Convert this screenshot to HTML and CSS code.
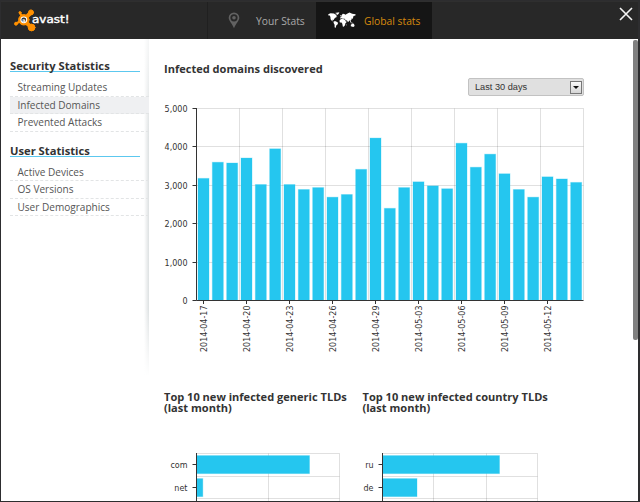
FILE: index.html
```html
<!DOCTYPE html>
<html lang="en">
<head>
    <meta charset="UTF-8">
    <title>avast! statistics</title>
    <link rel="stylesheet" href="styles.css">
</head>
<body>
    <div class="window">
        <div class="header">
            <div class="brand">
                <svg class="logo" viewBox="0 0 58 26">
                    <g fill="#ff9000" stroke="#ff9000" stroke-linecap="round">
                        <path d="M7 5 L11 12 M3 15.5 L10 12" fill="none" stroke-width="2.4" />
                        <path d="M17.5 5 L12 10.5 M12 13.5 L18 19" fill="none" stroke-width="4" />
                        <circle cx="10.8" cy="11.8" r="5.2" />
                        <circle cx="7" cy="4.6" r="1" />
                        <circle cx="3" cy="15.7" r="1.5" />
                        <circle cx="18" cy="4.4" r="2.5" />
                        <circle cx="18.6" cy="19.5" r="3.4" />
                    </g>
                    <circle cx="10.8" cy="11.8" r="3.4" fill="#fff" />
                    <circle cx="10.8" cy="11.8" r="2.4" fill="#343434" />
                    <text x="10.8" y="13.6" class="logo-a">a</text>
                    <text x="19" y="15" class="logo-text" textLength="37.5" lengthAdjust="spacingAndGlyphs">avast!</text>
                </svg>
            </div>
            <div class="tab">
                <svg class="pin" viewBox="0 0 12 17">
                    <path d="M6 .5 A5.3 5.3 0 0 0 .7 5.8 C.7 9 4.4 11.8 6 16.3 C7.6 11.8 11.3 9 11.3 5.8 A5.3 5.3 0 0 0 6 .5 Z M6 2.2 A3.6 3.6 0 1 1 6 9.4 A3.6 3.6 0 1 1 6 2.2 Z" fill="#626262" fill-rule="evenodd" />
                    <circle cx="6" cy="5.8" r="1.8" fill="#626262" />
                </svg>
                <span>Your Stats</span>
            </div>
            <div class="tab tab-active">
                <svg class="world" viewBox="0 0 28 17">
                    <g fill="#fff">
                        <path d="M.3 2.3 L2.5 1.2 L6 1.4 L7.4 2.5 L8.9 2.7 L8 4.2 L9.4 4.7 L7.2 5.7 L6.1 7 L5.7 8.2 L4.9 7.6 L4.3 8.4 L5.7 9.4 L4 8.9 L2.6 7.2 L2.4 5 L1.8 3.5 L.4 3.4 Z" />
                        <path d="M6.8 1 L11.4 .3 L10.5 2.1 L9.1 3 L8.4 1.6 Z" />
                        <path d="M5.9 9.2 L7.8 9.2 L10.1 10.7 L9.5 12.4 L8.4 13.3 L7.5 16 L6.6 15.3 L6.6 12.8 L5.5 10.7 Z" />
                        <path d="M12.2 5.6 L13.5 4.6 L13.2 3.7 L14.8 1.8 L16.3 2 L17.4 2.7 L19.5 1.4 L21.5 .6 L24.2 1.8 L27.6 2.3 L27.4 3.4 L25.5 4 L25.2 5.3 L24.8 6.8 L23.6 6.5 L23.4 8 L22.5 8.5 L23.2 10 L22.4 10 L21.5 8.3 L20.7 9.5 L20 10.2 L19 8.4 L17.6 8.2 L16.7 6.7 L14.9 6.7 L13.7 6.3 L12.4 6.8 Z" />
                        <path d="M12.6 7.2 L14.5 6.8 L17 7.8 L17.8 9.5 L18.9 9.7 L17.3 11.4 L17.1 13 L15.8 14.8 L14.8 14.5 L14.3 11.7 L13.5 10.6 L11.9 10.4 L11.4 8.8 Z" />
                        <path d="M22.8 12.7 L24.6 11.6 L26 12 L26.6 14 L25.3 14.9 L22.8 14.2 Z" />
                        <path d="M22 10.2 L24.2 10.8 L26 11.2 L23 11.2 Z M18.6 12.3 L19 12 L18.5 13.6 L18.1 13.7 Z M12.4 3.2 L13 3 L13 4.3 L12.2 4.4 Z" />
                    </g>
                </svg>
                <span>Global stats</span>
            </div>
            <div class="header-end">
                <svg class="close" viewBox="0 0 14 14">
                    <path d="M1 1 L13 13 M13 1 L1 13" stroke="#f4f4f4" stroke-width="1.6" />
                </svg>
            </div>
        </div>

        <div class="content">
            <div class="sidebar">
                <h2>Security Statistics</h2>
                <ul>
                    <li>Streaming Updates</li>
                    <li class="selected">Infected Domains</li>
                    <li>Prevented Attacks</li>
                </ul>
                <h2>User Statistics</h2>
                <ul>
                    <li>Active Devices</li>
                    <li>OS Versions</li>
                    <li>User Demographics</li>
                </ul>
            </div>

            <div class="main">
                <h3>Infected domains discovered</h3>
                <div class="filter">
                    <div class="select">
                        <span>Last 30 days</span>
                        <div class="select-arrow"></div>
                    </div>
                </div>
                <svg id="domainsChart" class="chart" width="430" height="260"></svg>

                <div class="columns">
                    <div class="column">
                        <h3>Top 10 new infected generic TLDs<br>(last month)</h3>
                        <svg id="genericChart" class="tld-chart" width="190" height="60"></svg>
                    </div>
                    <div class="column">
                        <h3>Top 10 new infected country TLDs<br>(last month)</h3>
                        <svg id="countryChart" class="tld-chart" width="190" height="60"></svg>
                    </div>
                </div>
            </div>

            <div class="scrollbar"><div class="scroll-thumb"></div></div>
        </div>
    </div>

    <script>
        const domains = [3180, 3600, 3580, 3710, 3020, 3950, 3020, 2890, 2940, 2690, 2760, 3415, 4230, 2400,
            2940, 3090, 2985, 2910, 4095, 3470, 3810, 3300, 2890, 2690, 3220, 3165, 3075];
        const days = ['2014-04-17', '2014-04-20', '2014-04-23', '2014-04-26', '2014-04-29',
            '2014-05-03', '2014-05-06', '2014-05-09', '2014-05-12'];

        function line(x1, y1, x2, y2, cls) {
            return `<line x1="${x1}" y1="${y1}" x2="${x2}" y2="${y2}" class="${cls}" />`;
        }

        // daily columns
        function drawDomains() {
            const left = 32.5, right = 419.5, top = 8.5, bottom = 200.5;
            const step = (right - left) / domains.length;
            let out = '';
            for (let i = 0; i <= 5; i++) {
                const y = Math.round(bottom - i * 38.4 - 0.5) + 0.5;
                if (i > 0) out += line(left, y, right, y, 'grid');
                out += `<text x="23.5" y="${y + 3}" class="tick-label">${i === 0 ? '0' : i + ',000'}</text>`;
                out += line(left - 4, y, left, y, 'axis');
            }
            for (let i = 1; i <= 9; i++) {
                out += line(left + i * 43, top, left + i * 43, bottom, 'grid');
            }
            domains.forEach((value, i) => {
                const h = value * 0.0384;
                out += `<rect x="${left + i * step + 1.5}" y="${bottom - h}" width="11" height="${h}" class="bar" />`;
            });
            out += line(left, top - 0.5, left, bottom, 'axis');
            out += line(left, bottom, right, bottom, 'axis');
            days.forEach((day, i) => {
                const x = 39.5 + i * 43;
                out += line(x, bottom, x, bottom + 3.5, 'axis');
                out += `<text class="tick-label" transform="translate(${x + 3.2} 205.5) rotate(-90)">${day}</text>`;
            });
            document.getElementById('domainsChart').innerHTML = out;
        }

        // horizontal bars per TLD
        function drawTlds(id, left, right, gridX, rows) {
            let out = '';
            [3.5, 26.5, 48.5].forEach(y => out += line(left, y, right, y, 'grid'));
            gridX.forEach(x => out += line(x, 3.5, x, 60, 'grid'));
            rows.forEach((row, i) => {
                const y = 5.6 + i * 23;
                out += `<rect x="${left}" y="${y}" width="${row[1]}" height="18" class="bar" />`;
                out += line(left - 4, 14.5 + i * 23, left, 14.5 + i * 23, 'axis');
                out += `<text x="${left - 9}" y="${17.5 + i * 23}" class="tick-label">${row[0]}</text>`;
            });
            out += line(left, 3, left, 60, 'axis');
            document.getElementById(id).innerHTML = out;
        }

        drawDomains();
        drawTlds('genericChart', 32.5, 175.5, [104.5, 175.5], [['com', 113], ['net', 6.3]]);
        drawTlds('countryChart', 20.5, 175.5, [71.5, 124.5, 175.5], [['ru', 117], ['de', 34.5]]);
    </script>
</body>
</html>
```
FILE: styles.css
```css
* {
    box-sizing: border-box;
}
body {
    margin: 0;
    font-family: "Open Sans", Arial, sans-serif;
    color: #333;
    overflow: hidden;
}
.window {
    width: 640px;
    height: 502px;
    background-color: #fff;
    border: 1px solid #2d2d2f;
    border-right-width: 2px;
    display: flex;
    flex-direction: column;
    overflow: hidden;
}
.header {
    height: 38px;
    flex-shrink: 0;
    display: flex;
    background-color: #282828;
    border-top: 1px solid #2f2f2f;
}
.brand {
    width: 207px;
    padding: 6px 0 0 12px;
    border-right: 1px solid #202020;
}
.logo {
    width: 58px;
    height: 26px;
    display: block;
}
.logo-text {
    font: 10px "DejaVu Sans", sans-serif;
    fill: #fff;
    stroke: #fff;
    stroke-width: .4;
}
.logo-a {
    font: bold 5px "DejaVu Sans", sans-serif;
    fill: #fff;
    text-anchor: middle;
}
.tab {
    width: 108px;
    display: flex;
    align-items: center;
    padding-left: 20px;
    font-size: 10.3px;
    color: #aaa;
    white-space: nowrap;
}
.tab-active {
    width: 116px;
    padding-left: 12px;
    background-color: #151515;
    color: #d58a0e;
}
.pin {
    width: 12px;
    height: 17px;
    margin-right: 16px;
}
.world {
    width: 28px;
    height: 17px;
    margin-right: 8px;
}
.header-end {
    flex: 1;
    display: flex;
    justify-content: flex-end;
    padding: 5px 5px 0 0;
}
.close {
    width: 14px;
    height: 14px;
}
.content {
    flex: 1;
    display: flex;
    min-height: 0;
}
.sidebar {
    width: 148px;
    height: 337px;
    flex-shrink: 0;
    padding: 19px 0 0 9px;
    background: linear-gradient(to bottom, rgba(255,255,255,.7), rgba(255,255,255,0) 30%, rgba(255,255,255,0) 80%, #fff),
        linear-gradient(to left, #dde1e2, #fff 5px);
}
h2 {
    width: 130px;
    height: 14px;
    margin: 0;
    border-bottom: 1px solid #5cc8ef;
    font-size: 11.2px;
    line-height: 15px;
    font-weight: 700;
    white-space: nowrap;
}
ul {
    list-style: none;
    margin: 0 0 11px;
    padding: 7px 0 0;
}
li {
    height: 17.5px;
    padding-left: 7.5px;
    border-bottom: 1px dashed #e2e4e5;
    font-size: 10.05px;
    line-height: 17px;
    color: #555;
}
.selected {
    background-color: #eff0f2;
}
.main {
    flex: 1;
    padding: 24px 0 0 15px;
}
h3 {
    margin: 0;
    font-size: 11.05px;
    line-height: 12px;
    font-weight: 700;
    white-space: nowrap;
}
.filter {
    display: flex;
    padding: 3px 0 0 304px;
}
.select {
    width: 116px;
    height: 18px;
    display: flex;
    align-items: center;
    justify-content: space-between;
    padding: 0 1px 0 6px;
    background-color: #e0e0e0;
    border: 1px solid #c2c2c2;
    border-radius: 2px;
    font: 9.2px "Liberation Sans", Arial, sans-serif;
}
.select-arrow {
    width: 12px;
    height: 13px;
    display: flex;
    align-items: center;
    justify-content: center;
    background: linear-gradient(#fafafa, #d5d5d5);
    border: 1px solid #777;
}
.select-arrow::after {
    content: "";
    border: 3px solid transparent;
    border-top-color: #111;
    border-bottom: 0;
}
.chart {
    display: block;
    margin-top: 4px;
}
.columns {
    display: flex;
    padding-top: 31px;
}
.columns h3 {
    font-size: 11.05px;
    line-height: 11px;
}
.column {
    width: 198.5px;
    flex-shrink: 0;
}
.tld-chart {
    display: block;
    margin-top: 37px;
}
.column + .column .tld-chart {
    margin-left: -0.5px;
}
.grid {
    stroke: #000;
    stroke-opacity: .12;
}
.axis {
    stroke: #333;
}
.bar {
    fill: #25c6ef;
    stroke: #25c6ef;
    stroke-opacity: .3;
}
.tick-label {
    font: 8px "DejaVu Sans", sans-serif;
    fill: #333;
    text-anchor: end;
}
.scrollbar {
    width: 5px;
    flex-shrink: 0;
    padding-top: 1px;
}
.scroll-thumb {
    height: 300px;
    background-color: #808080;
    border-radius: 2px;
}
```
